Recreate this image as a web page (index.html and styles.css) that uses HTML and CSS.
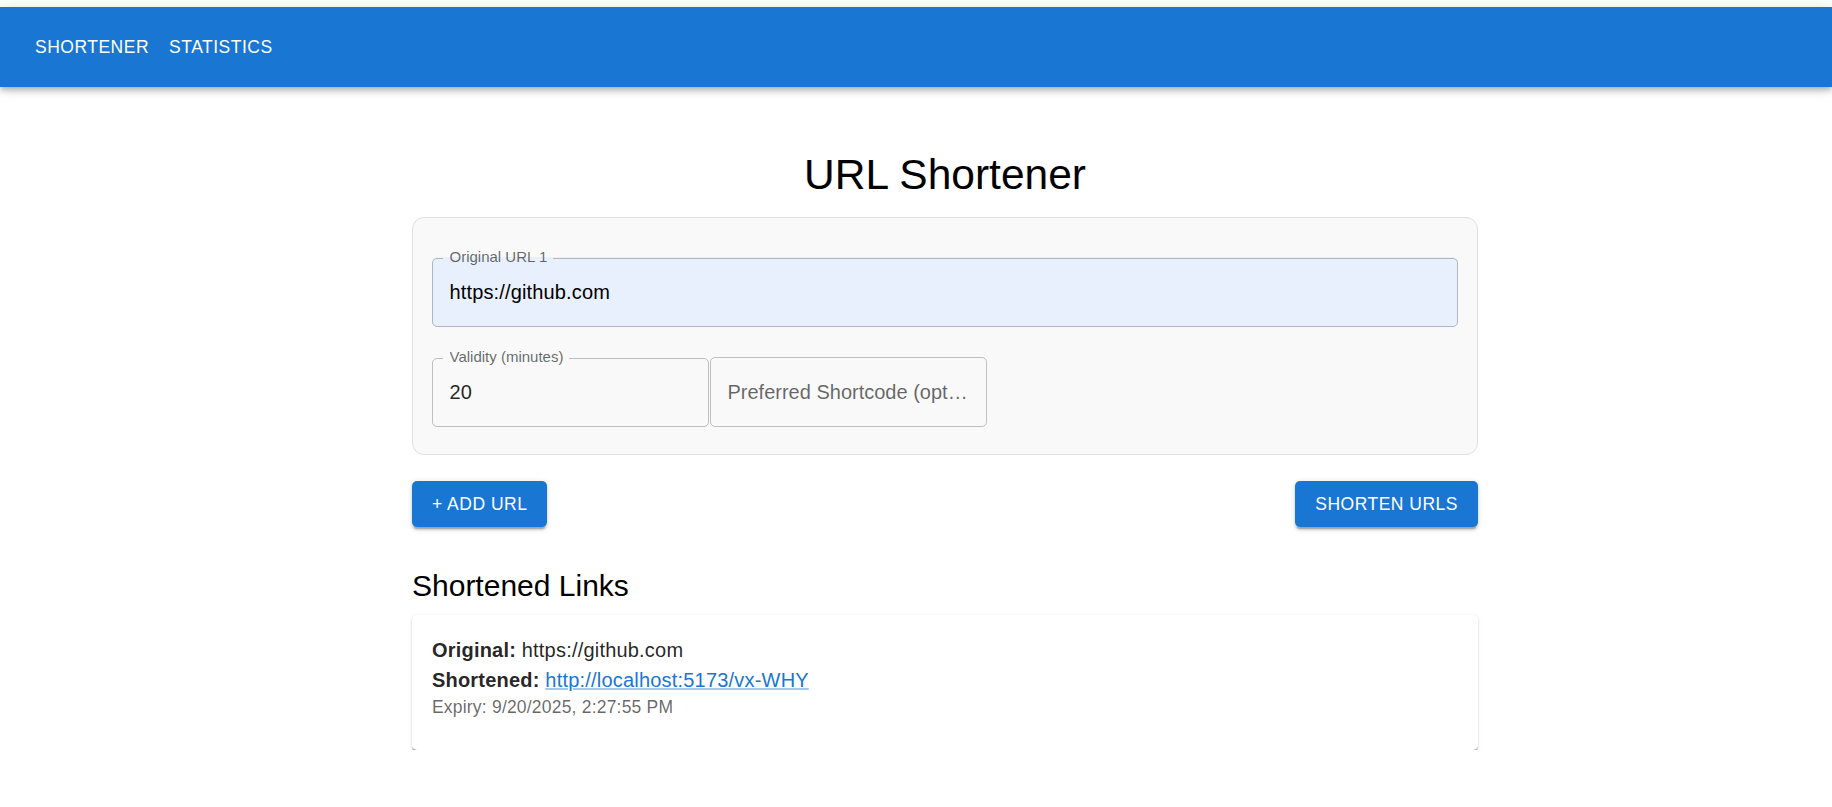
FILE: index.html
```html
<!DOCTYPE html>
<html lang="en">
<head>
<meta charset="utf-8">
<title>URL Shortener</title>
<link rel="stylesheet" href="styles.css">
</head>
<body>
<header class="appbar">
  <nav class="toolbar">
    <a class="nav-btn" href="#">SHORTENER</a>
    <a class="nav-btn" href="#">STATISTICS</a>
  </nav>
</header>
<main class="main">
  <div class="container">
    <h1 class="title">URL Shortener</h1>
    <section class="form-card">
      <div class="field field-full autofill">
        <input class="field-input" type="text" value="https://github.com" readonly>
        <label class="field-label shrunk">Original URL 1</label>
        <fieldset class="outline"><legend><span>Original URL 1</span></legend></fieldset>
      </div>
      <div class="field-row">
        <div class="field field-half">
          <input class="field-input" type="text" value="20" readonly>
          <label class="field-label shrunk">Validity (minutes)</label>
          <fieldset class="outline"><legend><span>Validity (minutes)</span></legend></fieldset>
        </div>
        <div class="field field-half">
          <input class="field-input" type="text" value="" readonly>
          <label class="field-label resting">Preferred Shortcode (optional)</label>
          <fieldset class="outline outline-plain"></fieldset>
        </div>
      </div>
    </section>
    <div class="actions">
      <button class="btn" type="button">+ ADD URL</button>
      <button class="btn" type="button">SHORTEN URLS</button>
    </div>
    <h2 class="section-title">Shortened Links</h2>
    <article class="result-card">
      <p class="line"><strong>Original:</strong> https://github.com</p>
      <p class="line"><strong>Shortened:</strong> <a class="short-link" href="#">http://localhost:5173/vx-WHY</a></p>
      <p class="expiry">Expiry: 9/20/2025, 2:27:55 PM</p>
    </article>
  </div>
</main>
</body>
</html>
```

FILE: styles.css
```css
* {
  box-sizing: border-box;
}

html, body {
  margin: 0;
  background: #ffffff;
}

body {
  padding-top: 7px;
  font-family: "Liberation Sans", Arial, sans-serif;
  color: rgba(0, 0, 0, 0.87);
}

/* App bar */
.appbar {
  background: #1976d2;
  height: 80px;
  box-shadow: 0 2.5px 5px -1.25px rgba(0, 0, 0, 0.2), 0 5px 6px 0 rgba(0, 0, 0, 0.14), 0 1.25px 12.5px 0 rgba(0, 0, 0, 0.12);
  position: relative;
}

.toolbar {
  height: 100%;
  display: flex;
  align-items: center;
  padding-left: 25px;
}

.nav-btn {
  color: #ffffff;
  text-decoration: none;
  font-size: 17.5px;
  letter-spacing: 0.5px;
  line-height: 30.6px;
  padding: 7.5px 10px;
}

/* Main */
.main {
  padding-left: 58px;
}

.container {
  width: 1066px;
  margin: 0 auto;
}

.title {
  margin: 62px 0 16px;
  font-size: 42.5px;
  font-weight: 400;
  line-height: 1.235;
  text-align: center;
  color: #000000;
}

/* Form card */
.form-card {
  background: #f9f9f9;
  border: 1px solid #e0e0e0;
  border-radius: 12px;
  padding: 19px 19px 17px;
}

.field {
  position: relative;
  height: 70px;
  margin: 20px 0 10px;
  border-radius: 5px;
}

.field.autofill {
  background: #e8f0fe;
}

.field-row {
  display: flex;
  gap: 1px;
}

.field-half {
  width: 277px;
}

.field-input {
  display: block;
  width: 100%;
  height: 100%;
  border: 0;
  outline: 0;
  background: transparent;
  padding: 0 17.5px;
  font-family: "Liberation Sans", Arial, sans-serif;
  font-size: 20px;
  letter-spacing: 0.15px;
  color: rgba(0, 0, 0, 0.87);
}

.autofill .field-input {
  color: #000000;
}

.field-label {
  position: absolute;
  left: 17.5px;
  color: rgba(0, 0, 0, 0.6);
  white-space: nowrap;
  overflow: hidden;
  text-overflow: ellipsis;
  pointer-events: none;
}

.field-label.shrunk {
  top: -9px;
  font-size: 15px;
  line-height: 18px;
}

.field-label.resting {
  top: 23px;
  max-width: 242px;
  font-size: 20px;
  line-height: 24px;
}

.outline {
  position: absolute;
  inset: -6px 0 0 0;
  margin: 0;
  padding: 0 10px;
  border: 1px solid rgba(0, 0, 0, 0.23);
  border-radius: 5px;
  min-width: 0;
  pointer-events: none;
}

.autofill .outline {
  border-color: #b0b7c3;
}

.outline-plain {
  inset: 0;
}

.outline legend {
  padding: 0;
  height: 14px;
  font-size: 15px;
  line-height: 14px;
  visibility: hidden;
  white-space: nowrap;
}

.outline legend span {
  display: inline-block;
  padding: 0 6px;
}

/* Buttons */
.actions {
  margin-top: 26px;
  display: flex;
  justify-content: space-between;
}

.btn {
  background: #1976d2;
  color: #ffffff;
  border: 0;
  border-radius: 5px;
  padding: 7.5px 20px;
  font-family: "Liberation Sans", Arial, sans-serif;
  font-size: 17.5px;
  letter-spacing: 0.5px;
  line-height: 30.6px;
  box-shadow: 0 3.75px 1.25px -2.5px rgba(0, 0, 0, 0.2), 0 2.5px 2.5px 0 rgba(0, 0, 0, 0.14), 0 1.25px 6.25px 0 rgba(0, 0, 0, 0.12);
  cursor: pointer;
}

/* Results */
.section-title {
  margin: 39px 0 9px;
  font-size: 30px;
  font-weight: 400;
  line-height: 40px;
  color: #000000;
}

.result-card {
  background: #ffffff;
  border-radius: 5px;
  padding: 20px 20px 30px;
  box-shadow: 0 2.5px 1.25px -1.25px rgba(0, 0, 0, 0.2), 0 1.25px 1.25px 0 rgba(0, 0, 0, 0.14), 0 1.25px 3.75px 0 rgba(0, 0, 0, 0.12);
}

.line {
  margin: 0;
  font-size: 20px;
  line-height: 30px;
  letter-spacing: 0.2px;
}

.line strong {
  font-weight: 700;
}

.short-link {
  color: #1976d2;
  text-decoration: underline;
  text-decoration-color: rgba(25, 118, 210, 0.4);
}

.expiry {
  margin: 0;
  font-size: 17.5px;
  line-height: 25px;
  letter-spacing: 0.2px;
  color: rgba(0, 0, 0, 0.6);
}
```
